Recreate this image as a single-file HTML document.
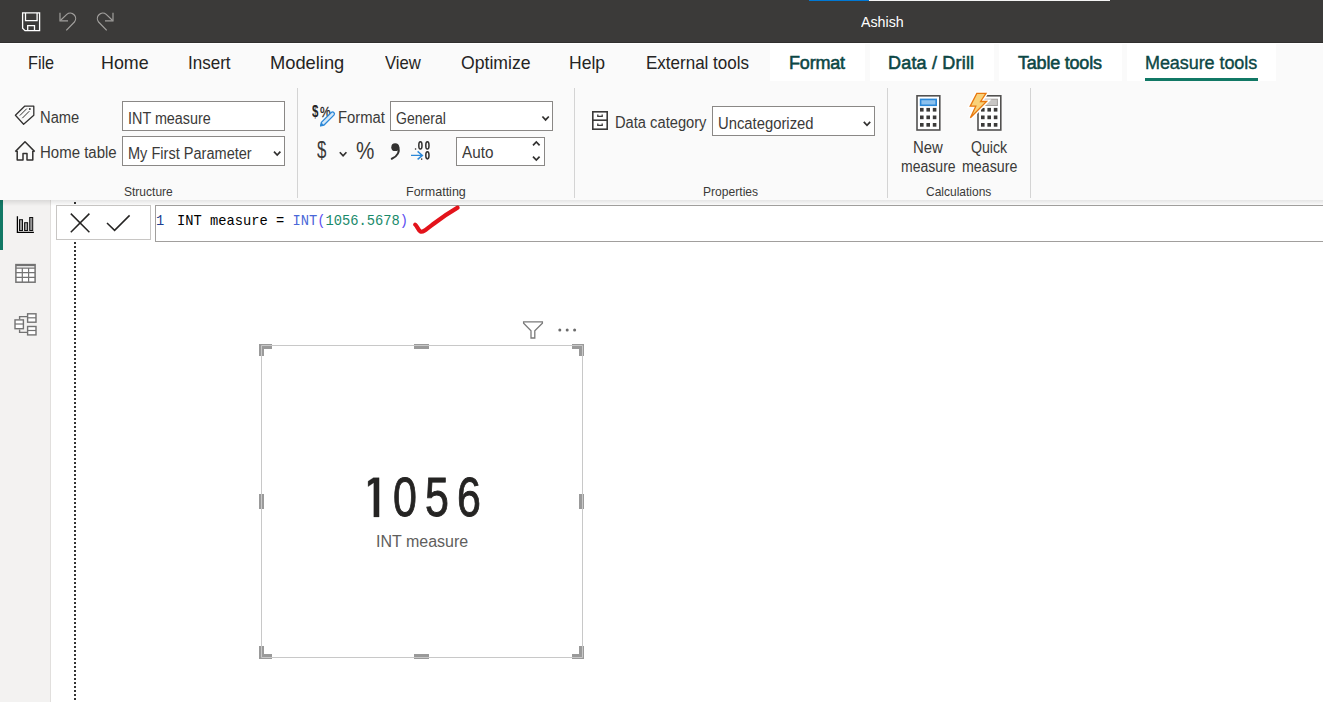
<!DOCTYPE html>
<html><head><meta charset="utf-8">
<style>
*{margin:0;padding:0;box-sizing:border-box}
html,body{width:1323px;height:702px;overflow:hidden;background:#fff;font-family:"Liberation Sans",sans-serif}
.a{position:absolute}
.t{position:absolute;white-space:nowrap;line-height:1}
#title{left:0;top:0;width:1323px;height:43px;background:#3b3a39}
#tabs{left:0;top:43px;width:1323px;height:157px;background:#fafafa}
.tab{font-size:18.5px;color:#252423}
.ctab{background:#fff;top:44px;height:37px}
.ctx{font-size:18px;color:#0c4745;font-weight:normal;-webkit-text-stroke:0.55px #0c4745}
.lbl{font-size:15.8px;color:#3b3a39}
.grp{font-size:13px;color:#3b3a39}
.box{position:absolute;background:#fff;border:1px solid #8a8886}
.sep{position:absolute;width:1px;background:#d4d4d4;top:88px;height:110px}
</style></head><body>
<div id="title" class="a"></div>
<div class="a" style="left:0;top:42px;width:1323px;height:1px;background:#302f2e"></div>
<div class="a" style="left:0;top:43px;width:1323px;height:1px;background:#fff;z-index:1"></div>
<div class="a" style="left:809px;top:0;width:60px;height:1px;background:#0078d4"></div>
<div class="a" style="left:869px;top:0;width:241px;height:1px;background:#f4f4f4"></div>
<div id="tx_Ashish" class="t" style="left:861px;top:14px;font-size:15px;color:#fff;letter-spacing:0px;transform:scaleX(0.9489);transform-origin:0 0">Ashish</div>

<div id="tabs" class="a"></div>
<div id="tx_File" class="t tab" style="left:28px;top:54px;letter-spacing:0px;transform:scaleX(0.8767);transform-origin:0 0">File</div>
<div id="tx_Home" class="t tab" style="left:101px;top:54px;letter-spacing:0px;transform:scaleX(0.9646);transform-origin:0 0">Home</div>
<div id="tx_Insert" class="t tab" style="left:188px;top:54px;letter-spacing:0px;transform:scaleX(0.9196);transform-origin:0 0">Insert</div>
<div id="tx_Modeling" class="t tab" style="left:270px;top:54px;letter-spacing:0px;transform:scaleX(0.9893);transform-origin:0 0">Modeling</div>
<div id="tx_View" class="t tab" style="left:385px;top:54px;letter-spacing:0px;transform:scaleX(0.9000);transform-origin:0 0">View</div>
<div id="tx_Optimize" class="t tab" style="left:461px;top:54px;letter-spacing:0px;transform:scaleX(0.9522);transform-origin:0 0">Optimize</div>
<div id="tx_Help" class="t tab" style="left:569px;top:54px;letter-spacing:0px;transform:scaleX(0.9489);transform-origin:0 0">Help</div>
<div id="tx_External" class="t tab" style="left:646px;top:54px;letter-spacing:0px;transform:scaleX(0.9189);transform-origin:0 0">External tools</div>
<div class="a ctab" style="left:770px;width:95px"></div>
<div class="a ctab" style="left:870px;width:124px"></div>
<div class="a ctab" style="left:999px;width:123px"></div>
<div class="a ctab" style="left:1127px;width:149px"></div>
<div id="tx_Format" class="t ctx" style="left:789px;top:54px;letter-spacing:-0.18px">Format</div>
<div id="tx_DataDrill" class="t ctx" style="left:888px;top:54px;letter-spacing:0.19px">Data / Drill</div>
<div id="tx_Tabletools" class="t ctx" style="left:1018px;top:54px;letter-spacing:-0.21px">Table tools</div>
<div id="tx_Measuretools" class="t ctx" style="left:1145px;top:54px;letter-spacing:-0.07px;-webkit-text-stroke:0.35px #0c4745">Measure tools</div>
<div class="a" style="left:1145px;top:78px;width:113px;height:3px;background:#117865"></div>

<!-- ribbon body -->
<div id="tx_Name" class="t lbl" style="left:40px;top:110px;letter-spacing:0px;transform:scaleX(0.9319);transform-origin:0 0">Name</div>
<div id="tx_Hometable" class="t lbl" style="left:40px;top:145px;letter-spacing:0px;transform:scaleX(0.9494);transform-origin:0 0">Home table</div>
<div class="box" style="left:122px;top:101px;width:163px;height:30px"></div>
<div class="box" style="left:122px;top:136px;width:163px;height:30px"></div>
<div id="tx_INTmeasure_in" class="t lbl" style="left:128px;top:111px;letter-spacing:0px;transform:scaleX(0.9100);transform-origin:0 0">INT measure</div>
<div id="tx_MyFirst_in" class="t lbl" style="left:128px;top:146px;letter-spacing:0px;transform:scaleX(0.9212);transform-origin:0 0">My First Parameter</div>

<div class="sep" style="left:297px"></div>
<div id="tx_Format_lbl" class="t lbl" style="left:338px;top:110px;letter-spacing:0px;transform:scaleX(0.9388);transform-origin:0 0">Format</div>
<div class="box" style="left:390px;top:101px;width:163px;height:30px"></div>
<div id="tx_General" class="t lbl" style="left:396px;top:111px;letter-spacing:0px;transform:scaleX(0.8875);transform-origin:0 0">General</div>
<div class="box" style="left:456px;top:137px;width:89px;height:29px"></div>
<div id="tx_Auto" class="t lbl" style="left:462px;top:145px;letter-spacing:0px;transform:scaleX(0.9670);transform-origin:0 0">Auto</div>

<div id="tx_dollar" class="t" style="left:317px;top:138px;font-size:24px;color:#3b3a39;transform:scaleX(0.7);transform-origin:0 0">$</div>
<div id="tx_pct" class="t" style="left:356px;top:139px;font-size:24px;color:#3b3a39;transform:scaleX(0.86);transform-origin:0 0">%</div>
<div id="tx_dp1" class="t" style="left:312px;top:104px;font-size:16px;font-weight:bold;color:#252423;transform:scaleX(0.72);transform-origin:0 0">$</div><div id="tx_dp2" class="t" style="left:320px;top:104px;font-size:15px;font-weight:normal;color:#252423;-webkit-text-stroke:0.3px #252423;transform:scaleX(0.8);transform-origin:0 0">%</div>
<div class="sep" style="left:574px"></div>
<div id="tx_DataCat" class="t lbl" style="left:615px;top:115px;letter-spacing:0px;transform:scaleX(0.9300);transform-origin:0 0">Data category</div>
<div class="box" style="left:712px;top:106px;width:163px;height:30px"></div>
<div id="tx_Uncat" class="t lbl" style="left:718px;top:116px;letter-spacing:0px;transform:scaleX(0.9380);transform-origin:0 0">Uncategorized</div>

<div class="sep" style="left:887px"></div>
<div id="tx_New" class="t lbl" style="left:913px;top:140px;letter-spacing:0px;transform:scaleX(0.9451);transform-origin:0 0">New</div>
<div id="tx_measure1" class="t lbl" style="left:901px;top:159px;letter-spacing:0px;transform:scaleX(0.8895);transform-origin:0 0">measure</div>
<div id="tx_Quick" class="t lbl" style="left:971px;top:140px;letter-spacing:0px;transform:scaleX(0.8952);transform-origin:0 0">Quick</div>
<div id="tx_measure2" class="t lbl" style="left:962px;top:159px;letter-spacing:0px;transform:scaleX(0.9016);transform-origin:0 0">measure</div>
<div class="sep" style="left:1030px"></div>

<div id="tx_Structure" class="t grp" style="left:124px;top:185px;letter-spacing:0px;transform:scaleX(0.9245);transform-origin:0 0">Structure</div>
<div id="tx_Formatting" class="t grp" style="left:406px;top:185px;letter-spacing:0px;transform:scaleX(0.9629);transform-origin:0 0">Formatting</div>
<div id="tx_Properties" class="t grp" style="left:703px;top:185px;letter-spacing:0px;transform:scaleX(0.9306);transform-origin:0 0">Properties</div>
<div id="tx_Calculations" class="t grp" style="left:926px;top:185px;letter-spacing:0px;transform:scaleX(0.9226);transform-origin:0 0">Calculations</div>


<!-- left nav -->
<div class="a" style="left:0;top:200px;width:51px;height:502px;background:#f3f2f1;border-right:1px solid #e1dfdd"></div>
<div class="a" style="left:0;top:200px;width:3px;height:50px;background:#117865"></div>

<!-- dotted line -->
<div class="a" style="left:74px;top:202px;width:2px;height:500px;background:repeating-linear-gradient(#333 0 2px,transparent 2px 4px)"></div>
<!-- formula bar -->
<div class="a" style="left:56px;top:205px;width:95px;height:35px;border:1px solid #c8c6c4;background:#fff"></div>
<div class="a" style="left:155px;top:205px;width:1168px;height:37px;border:1px solid #a19f9d;border-right:none;background:#fff"></div>
<div class="t" style="left:156px;top:215px;font-family:'Liberation Mono',monospace;font-size:13.75px;color:#1f3f8f">1</div>
<div class="t" style="left:177px;top:215px;font-family:'Liberation Mono',monospace;font-size:13.75px;color:#000">INT measure = <span style="color:#4a68d8">INT</span><span style="color:#5b4cf0">(</span><span style="color:#198a6a">1056.5678</span><span style="color:#5b4cf0">)</span></div>


<!-- ribbon shadow -->
<div class="a" style="left:0;top:200px;width:1323px;height:6px;background:linear-gradient(rgba(0,0,0,0.1),rgba(0,0,0,0))"></div>
<!-- card -->
<div id="d0" class="t" style="left:392.7px;top:470px;font-size:55px;color:#252423;-webkit-text-stroke:0.9px #252423;transform:scaleX(0.78);transform-origin:0 0">0</div><div id="d5" class="t" style="left:425px;top:470px;font-size:55px;color:#252423;-webkit-text-stroke:0.9px #252423;transform:scaleX(0.78);transform-origin:0 0">5</div><div id="d6" class="t" style="left:456.5px;top:470px;font-size:55px;color:#252423;-webkit-text-stroke:0.9px #252423;transform:scaleX(0.78);transform-origin:0 0">6</div>
<div id="tx_INTmeasure_card" class="t" style="left:376px;top:534px;font-size:16px;color:#605e5c;letter-spacing:0px;transform:scaleX(1.0000);transform-origin:0 0">INT measure</div>

<svg class="a" style="left:0;top:0" width="1323" height="702" viewBox="0 0 1323 702">
<!-- title icons -->
<g fill="none" stroke="#fff" stroke-width="1.3">
<path d="M22.6,12.9 H39.6 V30.6 H25 L22.6,28.2 Z"/>
<path d="M25.5,12.9 V20.6 H37.1 V12.9"/>
<path d="M27.7,30.6 V25.6 H34.5 V30.6"/>
</g>
<g fill="none" stroke="#a19f9d" stroke-width="1.2">
<path d="M60,12.8 V20.8 H68"/>
<path d="M60.6,20.2 L66.8,14.4 A5.4,5.4 0 0 1 74.4,22 L66.3,30.4"/>
<path d="M113,12.8 V20.8 H105"/>
<path d="M112.4,20.2 L106.2,14.4 A5.4,5.4 0 0 0 98.6,22 L106.7,30.4"/>
</g>
<!-- tag icon -->
<g fill="none" stroke="#323130" stroke-width="1.3" stroke-linejoin="round">
<path d="M15.4,115.3 L24.6,106.2 H33.8 V115.3 L23.6,124.2 Z"/>
<path d="M19.8,115.6 L26.8,108.6 M22.3,118.2 L29.3,111.2" stroke-width="1"/>
</g>
<circle cx="29.8" cy="109" r="1" fill="#323130"/>
<!-- house -->
<path d="M15.3,151.6 L25,141.8 L34.7,151.6 M17.2,149.8 V160 H23 V153.6 H27 V160 H32.8 V149.8" fill="none" stroke="#323130" stroke-width="1.5" stroke-linejoin="round"/>
<!-- chevrons in dropdowns -->
<g fill="none" stroke="#323130" stroke-width="1.7">
<path d="M274,151.7 L277.2,155.1 L280.4,151.7"/>
<path d="M542.4,116.5 L545.6,119.9 L548.8,116.5"/>
<path d="M863.8,121.9 L867,125.3 L870.2,121.9"/>
<path d="M339.8,152.2 L343.1,155.8 L346.4,152.2"/>
<path d="M533,145.4 L536.3,142 L539.6,145.4"/>
<path d="M533,156.6 L536.3,160 L539.6,156.6"/>
</g>
<!-- pencil -->
<path d="M320.6,125.8 L321.38,122.34 L331.26,112.46 A1.9,1.9 0 0 1 333.94,115.14 L324.06,125.02 Z" fill="#d5e8f8" stroke="#2b88d8" stroke-width="1.3" stroke-linejoin="round"/><path d="M320.6,125.8 L321.6,123.2 L323.2,124.8 Z" fill="#2b88d8" stroke="#2b88d8" stroke-width="1"/>
<!-- comma -->
<circle cx="395.2" cy="147.2" r="3.9" fill="#323130"/>
<path d="M398.2,146.5 C400,152 397.2,156.6 391.8,158.8" fill="none" stroke="#323130" stroke-width="2" stroke-linecap="round"/>
<!-- .00 -> .0 -->
<g fill="none" stroke="#323130" stroke-width="1.5">
<ellipse cx="420.4" cy="145.4" rx="1.6" ry="3.6"/>
<ellipse cx="427.4" cy="145.4" rx="1.6" ry="3.6"/>
<ellipse cx="427.4" cy="155.3" rx="1.6" ry="3.6"/>
</g>
<rect x="414.9" y="148.3" width="1.3" height="1.4" fill="#323130"/>
<rect x="421" y="158.4" width="1.3" height="1.4" fill="#323130"/>
<path d="M411,155.4 H422.4 M417.6,151.4 L422.4,155.4 L417.6,159.4" fill="none" stroke="#2b88d8" stroke-width="1.4"/>
<!-- cabinet -->
<g fill="none" stroke="#3b3a39" stroke-width="1.6">
<rect x="592.8" y="111.8" width="14.4" height="17.4" fill="#fff"/>
<path d="M592.8,120.2 H607.2"/>
<path d="M597.8,114.4 V116.4 H602.2 V114.4 M597.8,123.4 V125.4 H602.2 V123.4" stroke-width="1.3"/>
</g>
<!-- calculators -->
<g>
<rect x="917" y="95.8" width="22.8" height="34.2" fill="#fff" stroke="#525150" stroke-width="1.6"/>
<rect x="920.6" y="99.4" width="15.6" height="5.9" fill="#8cc1ee" stroke="#2b88d8" stroke-width="1.6"/>
<g fill="#3b3a39">
<rect x="920" y="107.9" width="3.6" height="3.7"/><rect x="926.4" y="107.9" width="3.6" height="3.7"/><rect x="932.8" y="107.9" width="3.6" height="3.7"/>
<rect x="920" y="115.5" width="3.6" height="3.7"/><rect x="926.4" y="115.5" width="3.6" height="3.7"/><rect x="932.8" y="115.5" width="3.6" height="3.7"/>
<rect x="920" y="123" width="3.6" height="3.7"/><rect x="926.4" y="123" width="3.6" height="3.7"/><rect x="932.8" y="123" width="3.6" height="3.7"/>
</g>
<rect x="978" y="95.8" width="22.8" height="34.2" fill="#fff" stroke="#525150" stroke-width="1.6"/>
<rect x="981.4" y="99.2" width="16" height="6.3" fill="#c8c6c4" stroke="#a19f9d" stroke-width="1"/>
<g fill="#3b3a39">
<rect x="981" y="107.9" width="3.6" height="3.7"/><rect x="987.4" y="107.9" width="3.6" height="3.7"/><rect x="993.8" y="107.9" width="3.6" height="3.7"/>
<rect x="981" y="115.5" width="3.6" height="3.7"/><rect x="987.4" y="115.5" width="3.6" height="3.7"/><rect x="993.8" y="115.5" width="3.6" height="3.7"/>
<rect x="981" y="123" width="3.6" height="3.7"/><rect x="987.4" y="123" width="3.6" height="3.7"/><rect x="993.8" y="123" width="3.6" height="3.7"/>
</g>
<path d="M976.8,93.4 H986 L980.6,101.5 H986.6 L970.4,117.8 L975.8,106.2 H970.2 Z" fill="#fff" stroke="#fff" stroke-width="4" stroke-linejoin="miter"/><path d="M976.8,93.4 H986 L980.6,101.5 H986.6 L970.4,117.8 L975.8,106.2 H970.2 Z" fill="#f9d27a" stroke="#e8780f" stroke-width="1.3" stroke-linejoin="miter"/>
</g>
<!-- nav icons -->
<g>
<path d="M17.4,216.2 V232.3 H33.9" fill="none" stroke="#000" stroke-width="1.3"/>
<rect x="19.5" y="219.7" width="3" height="10.8" fill="#999" stroke="#111" stroke-width="1"/>
<rect x="24.6" y="222.7" width="3" height="7.8" fill="#999" stroke="#111" stroke-width="1"/>
<rect x="29.7" y="217.5" width="3" height="13" fill="#999" stroke="#111" stroke-width="1"/>
</g>
<g fill="none" stroke="#737373" stroke-width="1.5">
<rect x="15.9" y="264.6" width="19.2" height="17.6" fill="#fff"/>
<path d="M15.9,265.4 H35.1" stroke-width="1.6"/>
<path d="M15.9,268.2 H35.1 M15.9,272.6 H35.1 M15.9,277.4 H35.1 M22.3,268.2 V282.2 M28.6,268.2 V282.2" stroke-width="1.2"/>
</g>
<g fill="none" stroke="#737373" stroke-width="1.4">
<path d="M19.6,319.2 V316.6 H27 M19.6,329.4 V332.4 H27"/>
<rect x="15" y="319.9" width="8.4" height="8.8" fill="#fff"/>
<path d="M15,324 H23.4" stroke-width="1.2"/>
<rect x="27.6" y="313.8" width="8.4" height="8.4" fill="#fff"/>
<path d="M27.6,317.8 H36" stroke-width="1.2"/>
<rect x="27.6" y="326.5" width="8.4" height="8.4" fill="#fff"/>
<path d="M27.6,330.5 H36" stroke-width="1.2"/>
</g>
<!-- X and check -->
<g fill="none" stroke="#252423" stroke-width="1.5">
<path d="M70.8,213.6 L89.4,232.2 M89.4,213.6 L70.8,232.2"/>
<path d="M107,223 L114.6,230.4 L129.6,215.4"/>
</g>
<!-- red check -->
<path d="M415.2,224.6 C417.2,226 418,230 420.5,231.6 C423,232.6 427,229 434,223.5 C442,217.4 450,212 457.6,207.6" fill="none" stroke="#e3131b" stroke-width="4.2" stroke-linecap="round" stroke-linejoin="round"/>
<!-- card chrome -->
<path d="M368.1,481.3 L373.4,477.7 H379.1 V516.9 H373.8 V482.7 L368.1,486.6 Z" fill="#252423" stroke="#252423" stroke-width="0.3"/>
<path d="M523.6,321.9 H542.4 V323.2 L534.8,330.8 V338 H531 V330.8 L523.6,323.2 Z" fill="none" stroke="#7a7a7a" stroke-width="1.3" stroke-linejoin="miter"/>
<g fill="#6b6b6b"><circle cx="559.8" cy="330" r="1.5"/><circle cx="567.2" cy="330" r="1.5"/><circle cx="574.6" cy="330" r="1.5"/></g>
<g fill="#9a9a9a">
<path d="M259,344 H272 V349 H264 V356 H259 Z"/>
<path d="M584,344 H572 V349 H579 V356 H584 Z"/>
<path d="M259,659 H272 V654 H264 V646 H259 Z"/>
<path d="M584,659 H572 V654 H579 V646 H584 Z"/>
<rect x="414" y="344" width="15" height="5"/>
<rect x="414" y="654" width="15" height="5"/>
<rect x="259" y="494" width="5" height="15"/>
<rect x="579" y="494" width="5" height="15"/>
</g>
<g fill="none" stroke="#c8c8c8" stroke-width="1">
<path d="M261.5,345.5 H582.5 V657.5 H261.5 Z"/>
</g>
</svg>
</body></html>
